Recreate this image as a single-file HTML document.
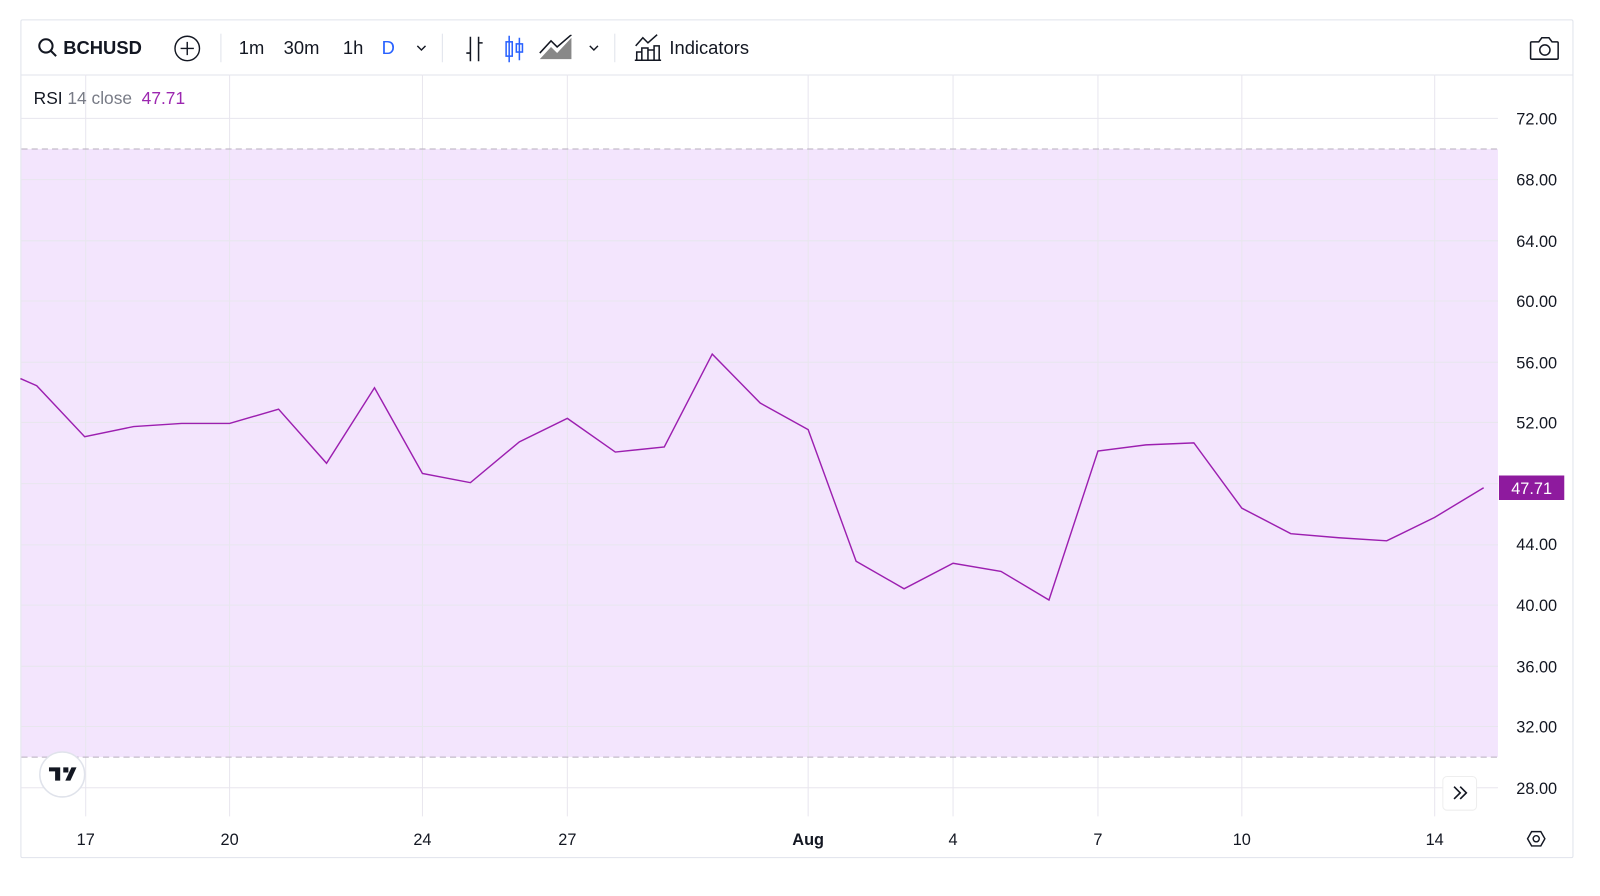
<!DOCTYPE html>
<html><head><meta charset="utf-8"><style>
body{margin:0;width:1600px;height:896px;background:#fff;font-family:"Liberation Sans",sans-serif;overflow:hidden}
#w{position:absolute;left:0;top:0;width:1568px;height:878px;transform:scale(1.0204);transform-origin:0 0}
.frame{position:absolute;left:20px;top:19px;width:1520px;height:820px;border:1px solid #e0e3eb;border-radius:2px}
.tb{position:absolute;left:0;top:0;width:1520px;height:53px;border-bottom:1px solid #e0e3eb}
.t{position:absolute;top:17px;font-size:18px;color:#131722}
.sep{position:absolute;top:13px;width:1px;height:28px;background:#e0e3eb}
.ax{position:absolute;font-size:15px;color:#131722}
</style></head><body><div id="w">
<div class="frame">
<div class="tb">
<svg style="position:absolute;left:16px;top:17px" width="20" height="20" viewBox="0 0 20 20"><circle cx="8" cy="8" r="6.5" fill="none" stroke="#131722" stroke-width="2"/><path d="M13 13l5 5" stroke="#131722" stroke-width="2"/></svg>
<div class="t" style="left:41px;font-weight:bold">BCHUSD</div>
<svg style="position:absolute;left:149px;top:14px" width="27" height="27"><circle cx="13.5" cy="13.5" r="12" fill="none" stroke="#131722" stroke-width="1.4"/><path d="M13.5 7v13M7 13.5h13" stroke="#131722" stroke-width="1.4"/></svg>
<div class="sep" style="left:195px"></div>
<div class="t" style="left:213px">1m</div>
<div class="t" style="left:257px">30m</div>
<div class="t" style="left:315px">1h</div>
<div class="t" style="left:353px;color:#2962ff">D</div>
<svg style="position:absolute;left:386px;top:22px" width="12" height="10"><path d="M2 3l4 4 4-4" fill="none" stroke="#131722" stroke-width="1.4"/></svg>
<div class="sep" style="left:412px"></div>
<svg style="position:absolute;left:432px;top:14px" width="24" height="28"><path d="M8 2v24M8 18H4M16 2v24M16 8h4" stroke="#131722" stroke-width="1.5" fill="none"/></svg>
<svg style="position:absolute;left:472px;top:13px" width="24" height="30"><path d="M6 2v26M16 4v22" stroke="#2962ff" stroke-width="1.5"/><rect x="3" y="8" width="6" height="14" fill="none" stroke="#2962ff" stroke-width="1.5"/><rect x="13" y="10" width="6" height="8" fill="none" stroke="#2962ff" stroke-width="1.5"/></svg>
<svg style="position:absolute;left:507px;top:14px" width="34" height="26"><path d="M1 24L12 12l6 6L32 3V24Z" fill="#888"/><path d="M1 18L12 6l6 6L32 0" fill="none" stroke="#131722" stroke-width="1.5"/></svg>
<svg style="position:absolute;left:555px;top:22px" width="12" height="10"><path d="M2 3l4 4 4-4" fill="none" stroke="#131722" stroke-width="1.4"/></svg>
<div class="sep" style="left:581px"></div>
<svg style="position:absolute;left:601px;top:13px" width="26" height="28"><path d="M1 12l7-8 5 5 9-8" fill="none" stroke="#131722" stroke-width="1.5"/><path d="M2 26V18h5v8M7 26V14h6v12M13 26V16h6v10M19 26V12h5v14M0 26h26" fill="none" stroke="#131722" stroke-width="1.5"/></svg>
<div class="t" style="left:635px">Indicators</div>
<svg style="position:absolute;left:1477px;top:13px" width="32" height="28"><path d="M3 8h7l3-4h7l3 4h5a1 1 0 0 1 1 1v15a1 1 0 0 1-1 1H3a1 1 0 0 1-1-1V9a1 1 0 0 1 1-1z" fill="none" stroke="#131722" stroke-width="1.5"/><circle cx="16" cy="16" r="5" fill="none" stroke="#131722" stroke-width="1.5"/></svg>
</div>
</div>
<svg style="position:absolute;left:0;top:0" width="1568" height="878">
<rect x="21" y="146" width="1447" height="596" fill="#f3e5fd"/>
<g stroke="#e8e6ee" stroke-width="1">
<path d="M84 73V800M225 73V800M414 73V800M556 73V800M792 73V800M934 73V800M1076 73V800M1217 73V800M1406 73V800"/>
<path d="M21 116H1468M21 176H1468M21 236H1468M21 295H1468M21 355H1468M21 414H1468M21 474H1468M21 534H1468M21 593H1468M21 653H1468M21 712H1468M21 772H1468"/>
</g>
<path d="M21 146H1468M21 742H1468" stroke="#b7aebd" stroke-width="1" stroke-dasharray="6 4"/>
<polyline fill="none" stroke="#9c1fb0" stroke-width="1.4" points="20,371 36,378 83,428 131,418 178,415 225,415 273,401 320,454 367,380 414,464 461,473 509,433 556,410 603,443 651,438 698,347 745,395 792,421 839,550 886,577 934,552 981,560 1028,588 1076,442 1123,436 1170,434 1217,498 1265,523 1312,527 1359,530 1406,507 1454,478"/>
<rect x="1469" y="466" width="64" height="24" fill="#8e1a9e"/>
<text x="1501" y="484" fill="#fff" font-size="16" text-anchor="middle" font-family="Liberation Sans">47.71</text>
<g font-family="Liberation Sans" font-size="16" fill="#131722" text-anchor="end">
<text x="1526" y="122">72.00</text><text x="1526" y="182">68.00</text><text x="1526" y="242">64.00</text><text x="1526" y="301">60.00</text><text x="1526" y="361">56.00</text><text x="1526" y="420">52.00</text><text x="1526" y="539">44.00</text><text x="1526" y="599">40.00</text><text x="1526" y="659">36.00</text><text x="1526" y="718">32.00</text><text x="1526" y="778">28.00</text>
</g>
<g font-family="Liberation Sans" font-size="16" fill="#131722" text-anchor="middle">
<text x="84" y="828">17</text><text x="225" y="828">20</text><text x="414" y="828">24</text><text x="556" y="828">27</text><text x="792" y="828" font-weight="bold">Aug</text><text x="934" y="828">4</text><text x="1076" y="828">7</text><text x="1217" y="828">10</text><text x="1406" y="828">14</text>
</g>
<circle cx="61" cy="759" r="22" fill="#fff" stroke="#e0e3eb" stroke-width="1.5"/>
<path d="M48 752h11v13h-5v-9h-6z M62 752h5v5h-5z M70 752h5l-6 13h-5z" fill="#131722"/>
<rect x="1414" y="761" width="33" height="33" rx="4" fill="#fff" stroke="#eee"/>
<path d="M1425 771l6 6-6 6M1431 771l6 6-6 6" fill="none" stroke="#131722" stroke-width="1.6"/>
<path d="M1497 822l4-7h9l4 7-4 7h-9z" fill="none" stroke="#131722" stroke-width="1.4"/>
<circle cx="1505.5" cy="822" r="3" fill="none" stroke="#131722" stroke-width="1.4"/>
</svg>
<div class="ax" style="left:33px;top:87px;font-size:17px">RSI <span style="color:#787b86">14 close</span> &nbsp;<span style="color:#9c27b0">47.71</span></div>
</div></body></html>
